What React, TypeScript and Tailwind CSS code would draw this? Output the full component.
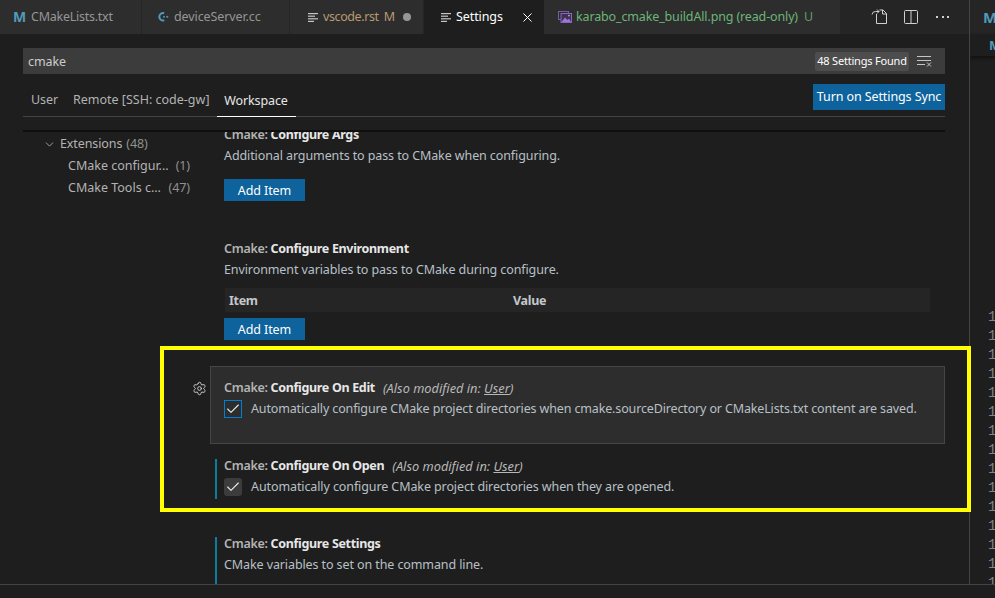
import { Settings as Gear, Check, ChevronDown, X } from "lucide-react";

const font = "font-['Noto_Sans','Open_Sans',sans-serif]";

function ListIcon({ color = "#c5c5c5" }: { color?: string }) {
  return (
    <svg width="11" height="11" viewBox="0 0 11 11" fill={color} className="shrink-0">
      <rect x="0" y="1" width="10" height="1.2" />
      <rect x="0" y="3.6" width="7" height="1.2" />
      <rect x="0" y="6.2" width="10" height="1.2" />
      <rect x="0" y="8.8" width="6" height="1.2" />
    </svg>
  );
}

function ImageIcon() {
  return (
    <svg width="14" height="12" viewBox="0 0 14 12" className="shrink-0">
      <rect x="0.5" y="0.5" width="10" height="8" fill="none" stroke="#7a5aa8" />
      <rect x="3" y="2.5" width="10.5" height="9" fill="#3b3350" stroke="#8a63c4" />
      <path d="M3.5 11 L7 6.5 L9.5 9 L11 7.5 L13 11 Z" fill="#a074d8" />
      <circle cx="11" cy="4.6" r="0.9" fill="#c9a6f0" />
    </svg>
  );
}

function CppIcon() {
  return (
    <svg width="12" height="12" viewBox="0 0 12 12" className="shrink-0" fill="none">
      <path d="M7.2 2.2 A3.7 3.7 0 1 0 7.2 9.2" stroke="#519aba" strokeWidth="2" />
      <path d="M6 5.8 H8 M7 4.8 V6.8 M9 5.8 H11.4 M10.2 4.8 V6.8" stroke="#519aba" strokeWidth="0.9" />
    </svg>
  );
}

function SettingTitle({ name, modified }: { name: string; modified?: boolean }) {
  return (
    <div className="flex h-[18px] items-center whitespace-pre pt-[2px] leading-[16px]">
      <span className="font-semibold tracking-[-0.3px] text-[#b4b4b4]">Cmake: </span>
      <span className="font-bold tracking-[-0.33px] text-[#e7e7e7]">{name}</span>
      {modified && (
        <span className="ml-[8px] text-[12.8px] italic tracking-normal text-[#b8b8b8]">
          (Also modified in: <span className="underline">User</span>)
        </span>
      )}
    </div>
  );
}

function AddItem() {
  return (
    <div className="flex h-[22px] w-[81px] items-center justify-center bg-[#0e639c] pt-[2px] text-white">
      Add Item
    </div>
  );
}

function CheckRow({ text, focused }: { text: string; focused?: boolean }) {
  return (
    <div className="flex h-[18px] items-center whitespace-nowrap text-[#b8c0c6]">
      <div
        className={
          focused
            ? "mr-[9px] flex h-[18px] w-[18px] shrink-0 items-center justify-center border border-[#007fd4] bg-[#2d2d2d]"
            : "mr-[9px] flex h-[18px] w-[18px] shrink-0 items-center justify-center rounded-[3px] bg-[#3c3c3c]"
        }
      >
        <Check size={16} strokeWidth={1.7} color="#e8e8e8" />
      </div>
      <span className={focused ? "tracking-[-0.145px]" : ""}>{text}</span>
    </div>
  );
}

export default function App() {
  const lineNumbers = Array.from({ length: 15 }, (_, i) => i);

  return (
    <div className={`relative flex h-[598px] w-[995px] flex-col overflow-hidden bg-[#1e1e1e] text-[12.5px] tracking-[-0.1px] ${font}`}>
      <div className="flex h-[584px] shrink-0">
        {/* Left editor group */}
        <div className="flex w-[970px] shrink-0 flex-col border-r border-[#444444]">
          {/* Tabs */}
          <div className="flex h-[34px] shrink-0 whitespace-nowrap bg-[#252526]">
            <div className="flex w-[142px] items-center border-r border-[#252526] bg-[#2d2d2d] pl-[13px] tracking-[-0.25px] text-[#969696]">
              <span className="w-[18px] text-[14px] font-bold leading-none text-[#519aba]">M</span>
              CMakeLists.txt
            </div>
            <div className="flex w-[148px] items-center gap-[5px] border-r border-[#252526] bg-[#2d2d2d] pl-[15px] text-[#969696]">
              <CppIcon />
              deviceServer.cc
            </div>
            <div className="flex w-[134px] items-center border-r border-[#252526] bg-[#2d2d2d] pl-[18px] tracking-[-0.4px] text-[#b89a72]">
              <span className="mr-[4px]"><ListIcon /></span>
              vscode.rst
              <span className="ml-[5px] text-[#b89a72]">M</span>
              <span className="ml-[8px] h-[8px] w-[8px] rounded-full bg-[#969696]" />
            </div>
            <div className="flex w-[120px] items-center bg-[#1e1e1e] pl-[17px] text-white">
              <span className="mr-[4px]"><ListIcon /></span>
              Settings
              <X size={15} strokeWidth={1.6} className="ml-[17px]" color="#ffffff" />
            </div>
            <div className="flex w-[296px] items-center bg-[#2d2d2d] pl-[14px] tracking-[-0.14px] text-[#6cb578]">
              <ImageIcon />
              <span className="ml-[4px]">karabo_cmake_buildAll.png (read-only)</span>
              <span className="ml-[6px] text-[#5f9e6a]">U</span>
            </div>
            <div className="flex flex-1 items-center pl-[31px]">
              <svg width="17" height="16" viewBox="0 0 17 16" fill="none" stroke="#d0d0d0" strokeWidth="1">
                <path d="M5.5 5 V14.5 H15.5 V4.5 L12 1 H8.5 M11.5 1 V5 H15.5" />
                <path d="M1 5.5 A3.5 3.5 0 0 1 4.5 2.5 H8 M6 0.5 L8 2.5 L6 4.5" />
              </svg>
              <svg width="14" height="14" viewBox="0 0 14 14" fill="none" stroke="#d0d0d0" strokeWidth="1" className="ml-[16px]">
                <rect x="0.5" y="0.5" width="13" height="13" rx="1" />
                <path d="M7 0.5 V13.5" />
              </svg>
              <div className="ml-[18px] flex gap-[3.5px]">
                <span className="h-[2px] w-[2px] bg-[#d0d0d0]" />
                <span className="h-[2px] w-[2px] bg-[#d0d0d0]" />
                <span className="h-[2px] w-[2px] bg-[#d0d0d0]" />
              </div>
            </div>
          </div>

          {/* Search */}
          <div className="ml-[23px] mt-[14px] flex h-[26px] w-[922px] shrink-0 items-center bg-[#3c3c3c] pl-[5px] text-[#cccccc]">
            <span className="pt-[2px]">cmake</span>
            <div className="ml-auto mr-[13px] flex items-center">
              <span className="flex h-[19px] w-[94px] items-center justify-center whitespace-nowrap rounded-[2px] bg-[#4d4d4d] text-[11px] tracking-[-0.2px] text-white">
                48 Settings Found
              </span>
              <svg width="15" height="12" viewBox="0 0 15 12" className="ml-[8px]" stroke="#c5c5c5" strokeWidth="1" fill="none">
                <path d="M0 1.5 H14 M0 5.5 H14 M0 9.5 H8 M10 7.5 L14 11.5 M14 7.5 L10 11.5" />
              </svg>
            </div>
          </div>

          {/* Scope tabs */}
          <div className="ml-[23px] flex h-[43px] w-[922px] shrink-0 items-end border-b border-[#444444] text-[#b3b3b3]">
            <div className="flex h-[33px] flex-1 items-center whitespace-nowrap">
              <span className="ml-[8px] pt-[2px]">User</span>
              <span className="ml-[15px] pt-[2px] tracking-normal">Remote [SSH: code-gw]</span>
              <span className="-mb-px ml-[7px] flex h-[33px] w-[79px] items-center justify-center border-b border-white pt-[3px] text-[#e7e7e7]">
                Workspace
              </span>
            </div>
            <div className="mb-[6px] flex h-[26px] w-[132px] items-center justify-center whitespace-nowrap bg-[#0e639c] pt-px text-white">
              Turn on Settings Sync
            </div>
          </div>

          {/* Sticky shadow */}
          <div className="ml-[23px] mt-[13px] h-[2px] w-[922px] shrink-0 bg-[#0f0f0f]" />

          <div className="flex min-h-0 flex-1 overflow-hidden">
            {/* TOC */}
            <div className="w-[210px] shrink-0 whitespace-nowrap pt-px text-[#b3b3b3]">
              <div className="flex h-[22px] items-center pl-[43px]">
                <ChevronDown size={13} strokeWidth={1.4} color="#c5c5c5" />
                <span className="ml-[4px]">Extensions</span>
                <span className="ml-[4px] text-[#909090]">(48)</span>
              </div>
              <div className="ml-[68px] flex h-[22px] w-[122px] items-center justify-between">
                <span className="tracking-normal">CMake configur...</span>
                <span className="text-[#909090]">(1)</span>
              </div>
              <div className="ml-[68px] flex h-[22px] w-[122px] items-center justify-between">
                <span className="tracking-normal">CMake Tools c...</span>
                <span className="text-[#909090]">(47)</span>
              </div>
            </div>

            {/* Settings list */}
            <div className="-mt-[7px] w-[735px] shrink-0 text-[#b8c0c6]">
              <div className="ml-[14px]">
                <SettingTitle name="Configure Args" />
                <div className="mt-[4px] leading-[18px]">Additional arguments to pass to CMake when configuring.</div>
                <div className="mt-[14px]"><AddItem /></div>
              </div>

              <div className="ml-[14px] mt-[38px]">
                <SettingTitle name="Configure Environment" />
                <div className="mt-[4px] leading-[18px]">Environment variables to pass to CMake during configure.</div>
                <div className="ml-px mt-[9px] flex h-[24px] w-[705px] items-center bg-[#252526] pl-[4px] pt-[2px] font-bold tracking-[-0.3px] text-[#c4c8cc]">
                  <span className="w-[284px]">Item</span>
                  <span>Value</span>
                </div>
                <div className="mt-[6px]"><AddItem /></div>
              </div>

              <div className="relative mt-[26px] h-[78px] border border-[#454545] bg-[#2d2d2d] pl-[13px] pt-[11px]">
                <Gear size={15} strokeWidth={1.5} color="#d0d0d0" className="absolute -left-[19px] top-[14px]" />
                <SettingTitle name="Configure On Edit" modified />
                <div className="mt-[4px]">
                  <CheckRow
                    focused
                    text="Automatically configure CMake project directories when cmake.sourceDirectory or CMakeLists.txt content are saved."
                  />
                </div>
              </div>

              <div className="ml-[5px] mt-[15px] flow-root h-[40px] border-l-2 border-[#0c7d9d] pl-[7px]">
                <div className="-mt-[3px]">
                  <SettingTitle name="Configure On Open" modified />
                </div>
                <div className="mt-[4px]">
                  <CheckRow text="Automatically configure CMake project directories when they are opened." />
                </div>
              </div>

              <div className="ml-[5px] mt-[38px] flow-root h-[60px] border-l-2 border-[#0c7d9d] pl-[7px]">
                <div className="-mt-[3px]">
                  <SettingTitle name="Configure Settings" />
                </div>
                <div className="mt-[4px] leading-[18px]">CMake variables to set on the command line.</div>
              </div>
            </div>
          </div>
        </div>

        {/* Right editor group */}
        <div className="min-w-0 flex-1 overflow-hidden">
          <div className="flex h-[34px] items-center bg-[#252526] pl-[13px]">
            <span className="text-[15px] font-bold leading-none text-[#519aba]">M</span>
          </div>
          <div className="flex h-[22px] items-center pl-[19px] shadow-[0_2px_3px_#111111]">
            <span className="text-[13px] font-bold leading-none text-[#519aba]">M</span>
          </div>
          <div className="mt-[252px] pl-[18px] font-['Liberation_Mono',monospace] text-[14px] leading-[19px] text-[#858585]">
            {lineNumbers.map((n) => (
              <div key={n} className="h-[19px]">1</div>
            ))}
          </div>
        </div>
      </div>
      <div className="flex-1 border-t border-[#444444]" />

      {/* Yellow annotation */}
      <div className="pointer-events-none absolute left-[160px] top-[346px] h-[166px] w-[811px] border-4 border-[#ffff00]" />
    </div>
  );
}
